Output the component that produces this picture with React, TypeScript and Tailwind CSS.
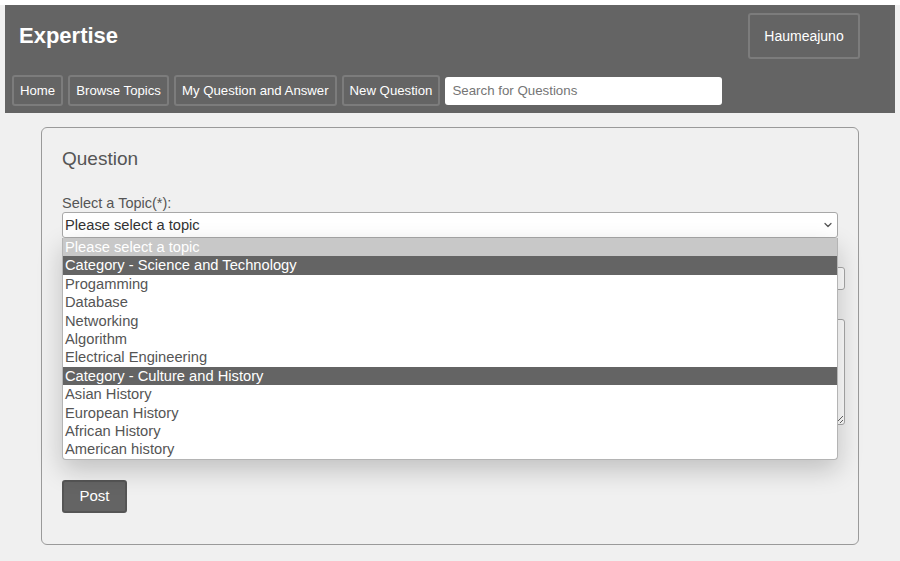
import { ChevronDown } from "lucide-react";

const navItems = ["Home", "Browse Topics", "My Question and Answer", "New Question"];

const topics = [
  { label: "Please select a topic", kind: "placeholder" },
  { label: "Category - Science and Technology", kind: "category" },
  { label: "Progamming", kind: "item" },
  { label: "Database", kind: "item" },
  { label: "Networking", kind: "item" },
  { label: "Algorithm", kind: "item" },
  { label: "Electrical Engineering", kind: "item" },
  { label: "Category - Culture and History", kind: "category" },
  { label: "Asian History", kind: "item" },
  { label: "European History", kind: "item" },
  { label: "African History", kind: "item" },
  { label: "American history", kind: "item" },
];

const Header = () => {
  return (
    <div className="mx-[5px] mt-[5px] h-[108px] bg-[#646464] px-[7px] pt-2">
      <div className="flex items-start justify-between">
        <h1 className="mt-[12px] pl-[7px] text-[22px] font-bold leading-none text-white">
          Expertise
        </h1>
        <button className="mr-[28px] h-[46px] w-[112px] rounded-[3px] border-2 border-[#7c7c7c] text-[14px] text-white">
          Haumeajuno
        </button>
      </div>
      <div className="mt-[16px] flex items-center gap-[5px]">
        {navItems.map((item) => (
          <button
            key={item}
            className="h-[31px] rounded-[3px] border-2 border-[#7c7c7c] px-[6px] text-[13.2px] text-white"
          >
            {item}
          </button>
        ))}
        <input
          className="h-[28px] w-[277px] rounded-[3px] bg-white px-[7px] text-[13.3px] text-[#333] outline-none placeholder:text-[#757575]"
          placeholder="Search for Questions"
        />
      </div>
    </div>
  );
};

const TopicSelect = () => {
  return (
    <div className="relative w-[776px]">
      <div className="flex h-[26px] items-center justify-between rounded-[3px] border border-[#a8a8a8] bg-white pl-[2px] pr-[3px] text-[14.7px] text-[#333]">
        <span>Please select a topic</span>
        <ChevronDown size={12} strokeWidth={2.5} className="text-[#555]" />
      </div>
      <div className="absolute left-0 top-full z-10 w-full overflow-hidden rounded-b-[4px] border border-t-0 border-[#b4b4b4] bg-white shadow-[0_10px_26px_rgba(0,0,0,0.2)]">
        {topics.map((t) => (
          <div
            key={t.label}
            className={
              t.kind === "placeholder"
                ? "h-[18.4px] bg-[#c8c8c8] pl-[2px] text-[14.7px] leading-[18px] text-white"
                : t.kind === "category"
                ? "h-[18.4px] bg-[#646464] pl-[2px] text-[14.7px] leading-[18px] text-white"
                : "h-[18.4px] pl-[2px] text-[14.7px] leading-[18px] text-[#555]"
            }
          >
            {t.label}
          </div>
        ))}
      </div>
    </div>
  );
};

const App = () => {
  return (
    <div
      className="min-h-[561px] bg-[#f0f0f0]"
      style={{ fontFamily: '"Liberation Sans", Arial, sans-serif' }}
    >
      <Header />
      <div className="mx-[41px] mt-[14px] h-[418px] rounded-[6px] border border-[#9a9a9a] px-5 pt-[20px]">
        <h2 className="text-[19px] leading-[22px] text-[#555]">Question</h2>
        <label className="mt-[25px] block text-[14.5px] leading-[17px] text-[#555]">
          Select a Topic(*):
        </label>
        <TopicSelect />
        {/* title + detail fields sit under the open list */}
        <div className="h-[29px]" />
        <input className="block h-[23px] w-[783px] rounded-[3px] border border-[#a8a8a8] bg-white" />
        <div className="h-[29px]" />
        <textarea className="block h-[106px] w-[783px] rounded-[3px] border border-[#a8a8a8] bg-white" />
        <button className="mt-[55px] h-[33px] w-[65px] rounded-[3px] border-2 border-[#555] bg-[#646464] text-[15px] text-white">
          Post
        </button>
      </div>
    </div>
  );
};

export default App;
